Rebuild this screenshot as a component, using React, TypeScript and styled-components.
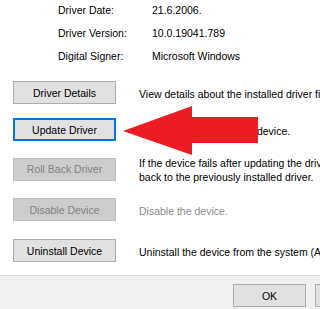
import React from "react";
import styled, { createGlobalStyle } from "styled-components";

const Global = createGlobalStyle`
  html, body { margin: 0; padding: 0; width: 320px; height: 309px; overflow: hidden; background: #ffffff; }
  body { font-family: "Liberation Sans", Arial, sans-serif; font-size: 10.5px; color: #000; }
`;

const Dialog = styled.div`
  position: relative;
  width: 320px;
  height: 309px;
  display: flex;
  flex-direction: column;
  overflow: hidden;
`;

const Page = styled.div`
  height: 275px;
  background: #ffffff;
  border-bottom: 1px solid #dadada;
  display: flex;
  flex-direction: column;
`;

const InfoGrid = styled.div`
  display: grid;
  grid-template-columns: 94px auto;
  grid-auto-rows: 23px;
  padding-left: 58px;
  margin-top: -1px;
  line-height: 15px;
  white-space: nowrap;
`;

const InfoText = styled.div`
  display: flex;
  align-items: center;
`;

const ActionRow = styled.div<{ $mt: number }>`
  display: flex;
  align-items: center;
  gap: 23px;
  padding-left: 13px;
  margin-top: ${(p) => p.$mt}px;
  white-space: nowrap;
`;

const Button = styled.div<{ $state?: "normal" | "focus" | "disabled"; $w?: number }>`
  box-sizing: border-box;
  flex: none;
  width: ${(p) => p.$w ?? 103}px;
  height: 23px;
  display: flex;
  align-items: center;
  justify-content: center;
  background: ${(p) => (p.$state === "disabled" ? "#cccccc" : "#e1e1e1")};
  color: ${(p) => (p.$state === "disabled" ? "#838383" : "#000")};
  border: ${(p) =>
    p.$state === "focus"
      ? "2px solid #0078d7"
      : p.$state === "disabled"
      ? "1px solid #bfbfbf"
      : "1px solid #adadad"};
`;

const Desc = styled.div<{ $disabled?: boolean }>`
  padding-top: 2px;
  line-height: 14px;
  color: ${(p) => (p.$disabled ? "#8a8a8a" : "#000")};
`;

const Footer = styled.div`
  flex: 1;
  background: #f0f0f0;
  display: flex;
  justify-content: flex-end;
  gap: 9px;
  padding: 8px 0 0 0;
  margin-right: -68px;
`;

const Arrow = styled.svg`
  position: absolute;
  left: 0;
  top: 0;
  pointer-events: none;
`;

export default function App() {
  return (
    <>
      <Global />
      <Dialog>
        <Page>
          <InfoGrid>
            <InfoText>Driver Date:</InfoText>
            <InfoText>21.6.2006.</InfoText>
            <InfoText>Driver Version:</InfoText>
            <InfoText>10.0.19041.789</InfoText>
            <InfoText>Digital Signer:</InfoText>
            <InfoText>Microsoft Windows</InfoText>
          </InfoGrid>
          <ActionRow $mt={13}>
            <Button>Driver Details</Button>
            <Desc>View details about the installed driver files.</Desc>
          </ActionRow>
          <ActionRow $mt={14}>
            <Button $state="focus">Update Driver</Button>
            <Desc>Update the driver for this device.</Desc>
          </ActionRow>
          <ActionRow $mt={13}>
            <Button $state="disabled">Roll Back Driver</Button>
            <Desc>
              If the device fails after updating the driver, roll
              <br />
              back to the previously installed driver.
            </Desc>
          </ActionRow>
          <ActionRow $mt={14}>
            <Button $state="disabled">Disable Device</Button>
            <Desc $disabled>Disable the device.</Desc>
          </ActionRow>
          <ActionRow $mt={18}>
            <Button>Uninstall Device</Button>
            <Desc>Uninstall the device from the system (Advanced).</Desc>
          </ActionRow>
        </Page>
        <Footer>
          <Button $w={73}>OK</Button>
          <Button $w={73}>Cancel</Button>
        </Footer>
        <Arrow width="320" height="309" viewBox="0 0 320 309">
          <polygon
            points="123,131 192,106 192,117 258,117 258,143 192,143 192,155"
            fill="#ed1c24"
          />
        </Arrow>
      </Dialog>
    </>
  );
}
